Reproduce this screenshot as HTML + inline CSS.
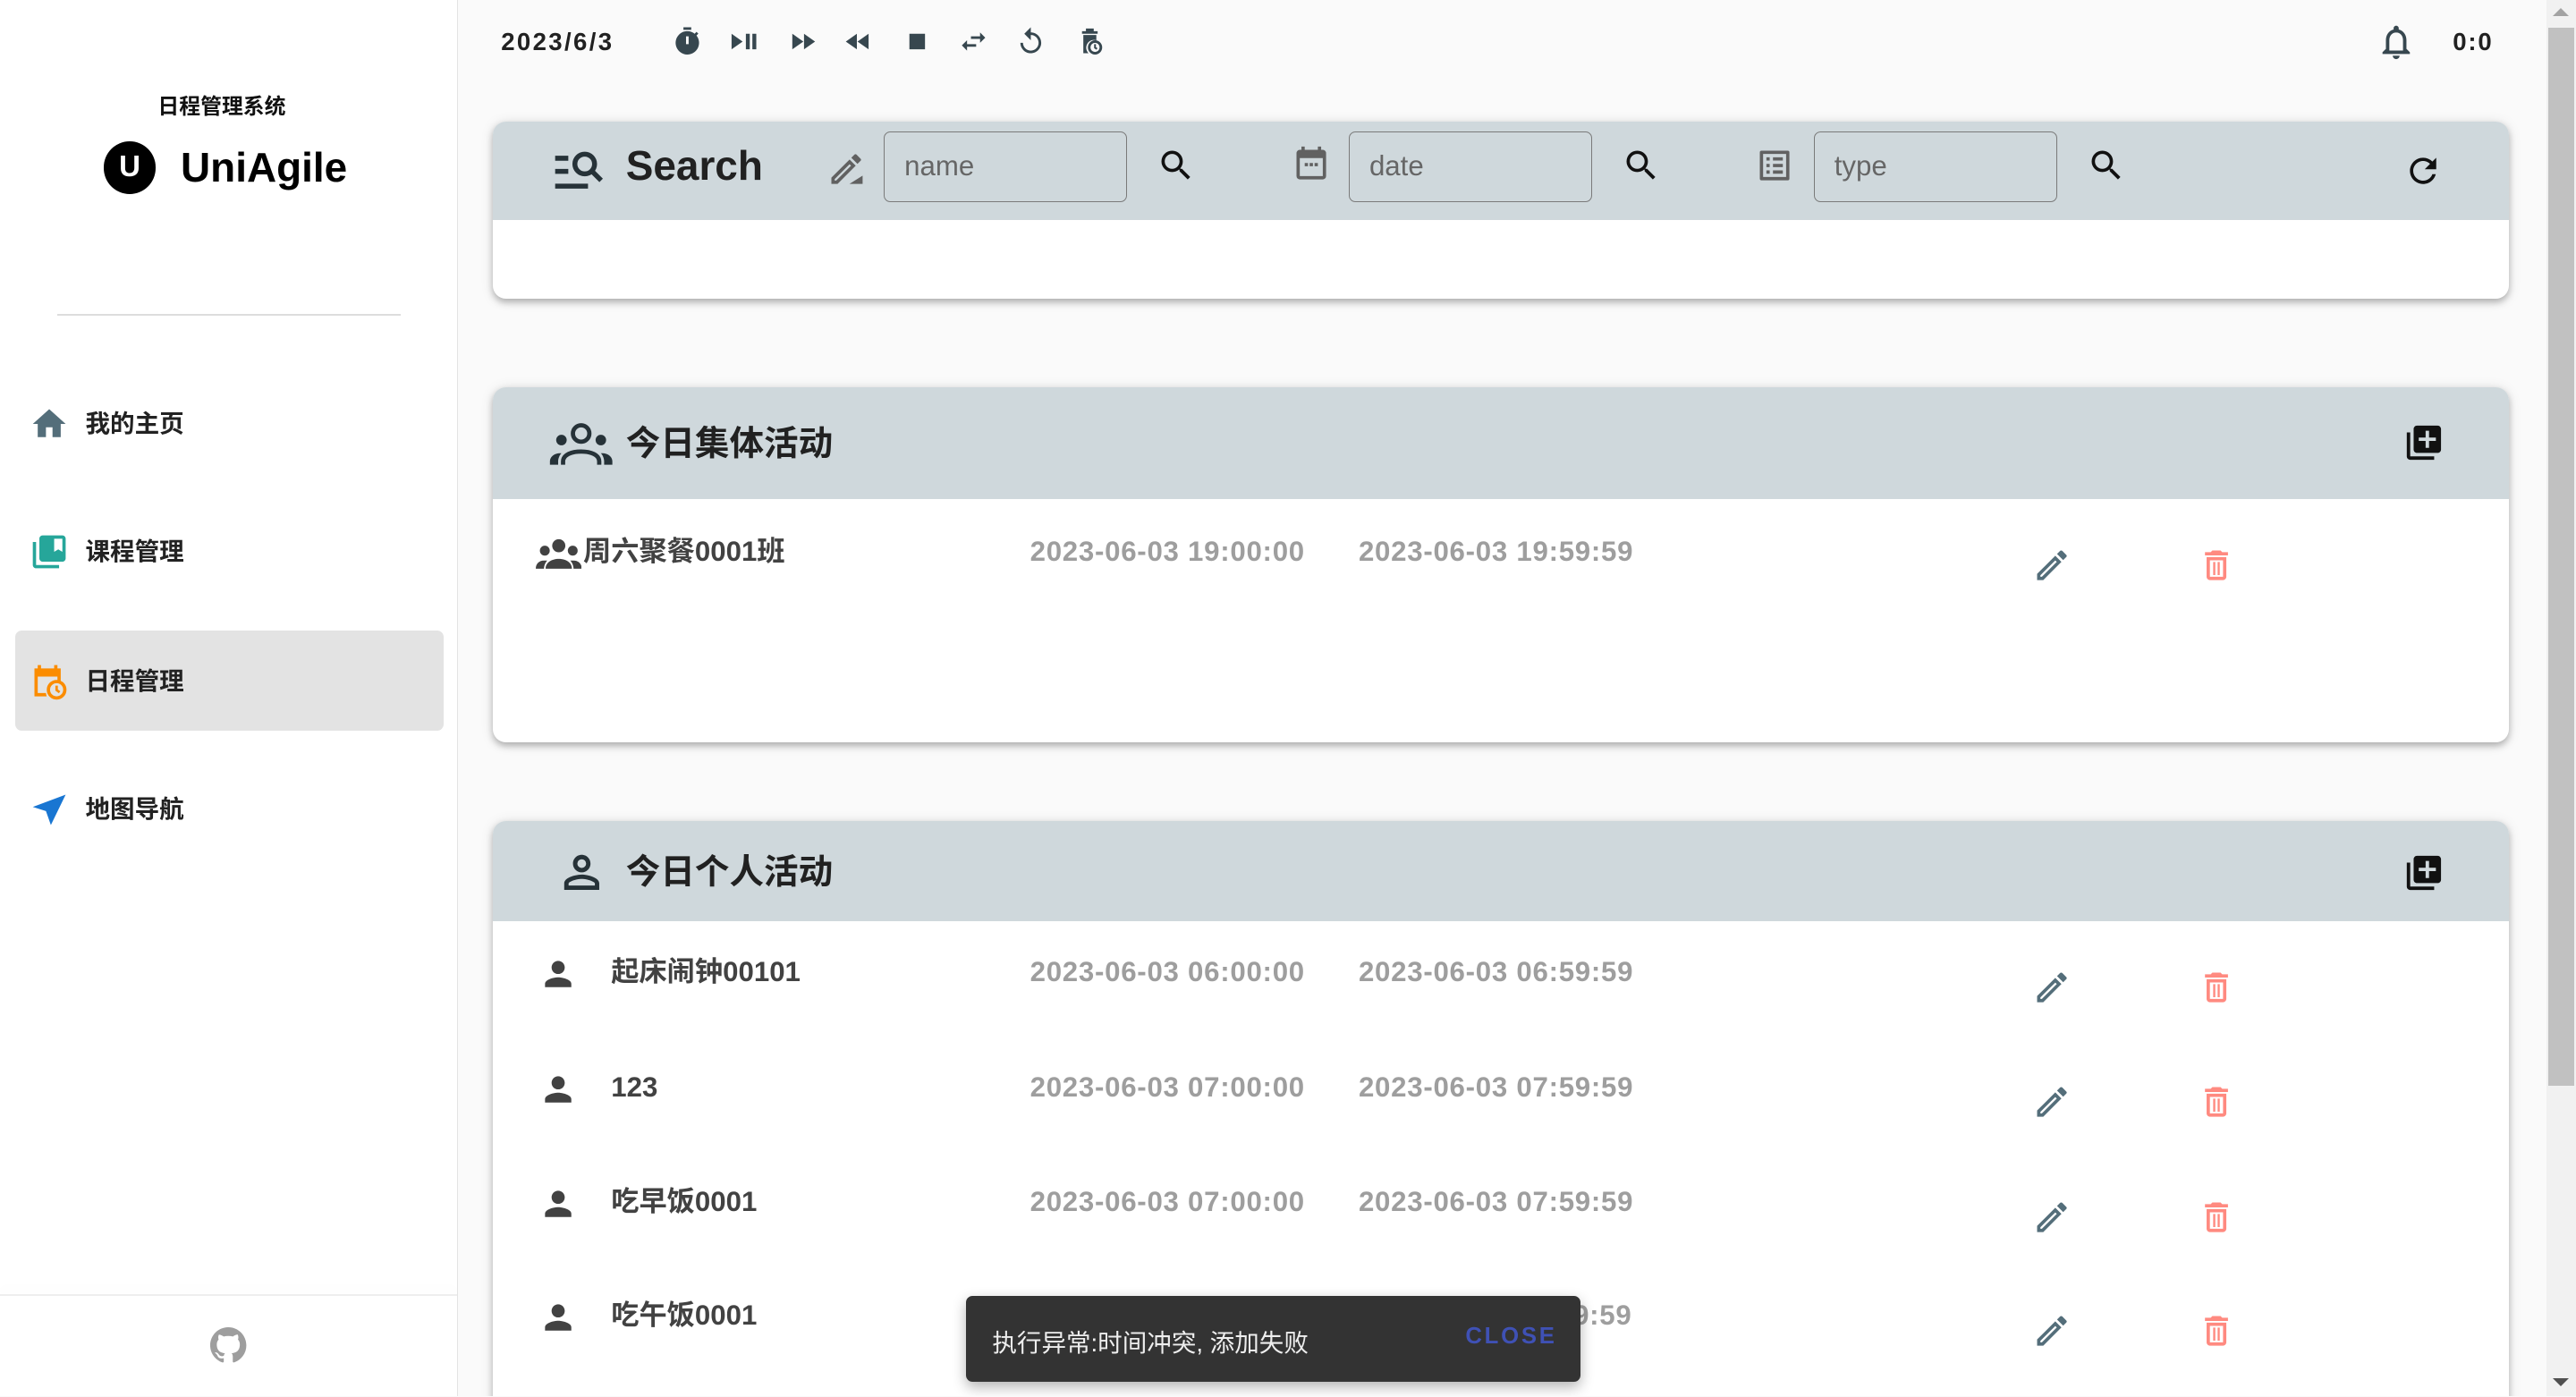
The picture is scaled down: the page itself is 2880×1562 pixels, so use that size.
<!DOCTYPE html>
<html><head><meta charset="utf-8"><style>
html,body{margin:0;padding:0;width:2880px;height:1562px;overflow:hidden;background:#fafafa;}
#w{zoom:1.8367;width:1568px;height:850px;position:relative;overflow:hidden;font-family:"Liberation Sans","Noto Sans CJK SC",sans-serif;}
.a{position:absolute;}
svg{position:absolute;display:block;}
.sb{left:0;top:0;width:278px;height:850px;background:#fff;border-right:1px solid #e3e3e3;}
.nav{left:52px;font-size:15px;font-weight:bold;color:#222;line-height:20px;}
.card{background:#fff;border-radius:8px;box-shadow:0 2px 4px rgba(0,0,0,.25),0 1px 8px rgba(0,0,0,.1);overflow:hidden;}
.hd{background:#cfd8dc;position:absolute;left:0;top:0;right:0;}
.inp{position:absolute;top:6px;width:148px;height:43px;border:1px solid #7a7a7a;border-radius:4px;font-size:17px;color:#666;line-height:41px;padding-left:12px;box-sizing:border-box;}
.ttl{font-size:21px;font-weight:bold;color:#212121;}
.nm{font-size:17px;font-weight:bold;color:#424242;line-height:20px;}
.dt{font-size:17px;font-weight:bold;color:#9e9e9e;line-height:20px;letter-spacing:0.4px;}
</style></head><body><div id="w">
<div class="a sb"></div>
<div class="a" style="left:0;width:270px;top:54px;text-align:center;font-size:13px;font-weight:bold;color:#111">日程管理系统</div>
<div class="a" style="left:63px;top:86px;width:32px;height:32px;border-radius:50%;background:#000;color:#fff;font-size:18px;font-weight:bold;text-align:center;line-height:32px">U</div>
<div class="a" style="left:110px;top:87px;font-size:25px;font-weight:bold;color:#000">UniAgile</div>
<div class="a" style="left:35px;top:191px;width:209px;height:1px;background:#ddd"></div>
<div class="a" style="left:9px;top:384px;width:261px;height:61px;background:#e3e3e3;border-radius:4px"></div>
<svg style="left:18px;top:246px" width="24" height="24" viewBox="0 0 24 24"><path fill="#546e7a" d="M10 20v-6h4v6h5v-8h3L12 3 2 12h3v8z"/></svg>
<div class="a nav" style="top:248px">我的主页</div>
<svg style="left:18px;top:324px" width="24" height="24" viewBox="0 0 24 24"><path fill="#26a69a" d="M4 6H2v14c0 1.1.9 2 2 2h14v-2H4V6zm16-4H8c-1.1 0-2 .9-2 2v12c0 1.1.9 2 2 2h12c1.1 0 2-.9 2-2V4c0-1.1-.9-2-2-2zm0 10l-2.5-1.5L15 12V4h5v8z"/></svg>
<div class="a nav" style="top:326px">课程管理</div>
<svg style="left:18px;top:403px" width="24" height="24" viewBox="0 0 24 24"><path fill="#fb8c00" d="M3 4h2V2h2v2h8V2h2v2h2v8a6 6 0 0 0-2-.4V9H5v10h5a6 6 0 0 0 .5 2H3z"/><circle cx="16.5" cy="17" r="5" fill="none" stroke="#fb8c00" stroke-width="2"/><path d="M16.5 14.5v2.7l1.8 1.3" stroke="#fb8c00" stroke-width="1.5" fill="none"/></svg>
<div class="a nav" style="top:405px">日程管理</div>
<svg style="left:18px;top:481px" width="24" height="24" viewBox="0 0 24 24"><path fill="#1976d2" d="M22 3L2 10.5l8 2.5 3 8.5z"/></svg>
<div class="a nav" style="top:483px">地图导航</div>
<div class="a" style="left:0;top:788px;width:278px;height:1px;background:#eee;box-shadow:0 -3px 6px rgba(0,0,0,.05)"></div>
<svg style="left:128px;top:808px" width="22" height="22" viewBox="0 0 16 16"><path fill="#9e9e9e" d="M8 0C3.58 0 0 3.58 0 8c0 3.54 2.29 6.53 5.47 7.59.4.07.55-.17.55-.38 0-.19-.01-.82-.01-1.49-2.01.37-2.53-.49-2.69-.94-.09-.23-.48-.94-.82-1.13-.28-.15-.68-.52-.01-.53.63-.01 1.08.58 1.23.82.72 1.21 1.87.87 2.33.66.07-.52.28-.87.51-1.07-1.78-.2-3.64-.89-3.64-3.95 0-.87.31-1.59.82-2.15-.08-.2-.36-1.02.08-2.12 0 0 .67-.21 2.2.82.64-.18 1.32-.27 2-.27.68 0 1.36.09 2 .27 1.53-1.04 2.2-.82 2.2-.82.44 1.1.16 1.92.08 2.12.51.56.82 1.27.82 2.15 0 3.07-1.87 3.75-3.65 3.95.29.25.54.73.54 1.48 0 1.07-.01 1.93-.01 2.2 0 .21.15.46.55.38A8.013 8.013 0 0016 8c0-4.42-3.58-8-8-8z"/></svg>

<div class="a" style="left:305px;top:17px;font-size:15px;font-weight:bold;color:#212121;letter-spacing:1.3px">2023/6/3</div>
<svg style="left:409px;top:16px" width="19" height="19" viewBox="0 0 24 24"><path fill="#37474f" d="M15 1H9v2h6V1zm4.03 6.39l1.42-1.42-1.41-1.41-1.42 1.42A9 9 0 1 0 19.03 7.39zM13 14h-2V8h2v6z"/></svg>
<svg style="left:444px;top:16px" width="19" height="19" viewBox="0 0 24 24"><path fill="#37474f" d="M2 6v12l8.5-6zM13 6h3v12h-3zM18 6h3v12h-3z"/></svg>
<svg style="left:479px;top:16px" width="19" height="19" viewBox="0 0 24 24"><path fill="#37474f" d="M4 18l8.5-6L4 6v12zm9-12v12l8.5-6L13 6z"/></svg>
<svg style="left:513px;top:16px" width="19" height="19" viewBox="0 0 24 24"><path fill="#37474f" d="M11 18V6l-8.5 6 8.5 6zm.5-6l8.5 6V6l-8.5 6z"/></svg>
<svg style="left:549px;top:16px" width="19" height="19" viewBox="0 0 24 24"><path fill="#37474f" d="M6 6h12v12H6z"/></svg>
<svg style="left:583px;top:16px" width="19" height="19" viewBox="0 0 24 24"><path fill="#37474f" d="M6.99 11L3 15l3.99 4v-3H14v-2H6.99v-3zM21 9l-3.99-4v3H10v2h7.01v3L21 9z"/></svg>
<svg style="left:618px;top:16px" width="19" height="19" viewBox="0 0 24 24"><path fill="#37474f" d="M12 5V1L7 6l5 5V7c3.31 0 6 2.69 6 6s-2.69 6-6 6-6-2.69-6-6H4c0 4.42 3.58 8 8 8s8-3.58 8-8-3.58-8-8-8z"/></svg>
<svg style="left:654px;top:16px" width="19" height="19" viewBox="0 0 24 24"><path fill="#37474f" d="M6 4h12v2H6zM9 2h6v2H9zM7 7h10v4a6 6 0 0 0-6 10H7z"/><circle cx="16" cy="16.5" r="4.5" fill="none" stroke="#37474f" stroke-width="2"/><path d="M16 14v2.7l1.5 1" stroke="#37474f" stroke-width="1.4" fill="none"/></svg>
<svg style="left:1446px;top:13px" width="25" height="25" viewBox="0 0 24 24"><path fill="#37474f" d="M12 22c1.1 0 2-.9 2-2h-4c0 1.1.9 2 2 2zm6-6v-5c0-3.07-1.64-5.64-4.5-6.32V4c0-.83-.67-1.5-1.5-1.5s-1.5.67-1.5 1.5v.68C7.63 5.36 6 7.92 6 11v5l-2 2v1h16v-1l-2-2zm-2 1H8v-6c0-2.48 1.51-4.5 4-4.5s4 2.02 4 4.5v6z"/></svg>
<div class="a" style="left:1493px;top:17px;font-size:15px;font-weight:bold;color:#212121;letter-spacing:1px">0:0</div>

<div class="a card" style="left:300px;top:74px;width:1227px;height:108px">
 <div class="hd" style="height:60px">
  <svg style="left:36px;top:16px" width="34" height="28" viewBox="0 0 34 28"><path fill="#263238" d="M2 5h8v3H2zM2 13h8v3H2zM2 22h20v3H2z"/><circle cx="20" cy="10" r="6" fill="none" stroke="#263238" stroke-width="3"/><path d="M24 14l6 6" stroke="#263238" stroke-width="3"/></svg>
  <div class="a" style="left:81px;top:12px;font-size:25px;font-weight:bold;color:#212121">Search</div>
  <svg style="left:203px;top:17px" width="24" height="24" viewBox="0 0 24 24"><path fill="#616161" d="M3 17.25V21h3.75L17.81 9.94l-3.75-3.75L3 17.25zM5.92 19H5v-.92l9.06-9.06.92.92L5.92 19zM20.71 5.63l-2.34-2.34a1 1 0 0 0-1.41 0l-1.83 1.83 3.75 3.75 1.83-1.83a1 1 0 0 0 0-1.41zM14 21h8v-5z"/></svg>
  <div class="inp" style="left:238px">name</div>
  <svg style="left:404px;top:15px" width="24" height="24" viewBox="0 0 24 24"><path fill="#111" d="M15.5 14h-.79l-.28-.27A6.471 6.471 0 0016 9.5 6.5 6.5 0 109.5 16c1.61 0 3.09-.59 4.23-1.57l.27.28v.79l5 4.99L20.49 19l-4.99-5zm-6 0C7.01 14 5 11.99 5 9.5S7.01 5 9.5 5 14 7.01 14 9.5 11.99 14 9.5 14z"/></svg>
  <svg style="left:486px;top:14px" width="24" height="24" viewBox="0 0 24 24"><path fill="#616161" d="M19 3h-1V1h-2v2H8V1H6v2H5a2 2 0 0 0-2 2v14a2 2 0 0 0 2 2h14a2 2 0 0 0 2-2V5a2 2 0 0 0-2-2zm0 16H5V8h14v11zM8 11h2v2H8zM11 11h2v2h-2zM14 11h2v2h-2z"/></svg>
  <div class="inp" style="left:521px">date</div>
  <svg style="left:687px;top:15px" width="24" height="24" viewBox="0 0 24 24"><path fill="#111" d="M15.5 14h-.79l-.28-.27A6.471 6.471 0 0016 9.5 6.5 6.5 0 109.5 16c1.61 0 3.09-.59 4.23-1.57l.27.28v.79l5 4.99L20.49 19l-4.99-5zm-6 0C7.01 14 5 11.99 5 9.5S7.01 5 9.5 5 14 7.01 14 9.5 11.99 14 9.5 14z"/></svg>
  <svg style="left:768px;top:15px" width="24" height="24" viewBox="0 0 24 24"><path fill="#616161" d="M4 3h16a1 1 0 0 1 1 1v16a1 1 0 0 1-1 1H4a1 1 0 0 1-1-1V4a1 1 0 0 1 1-1zm1 2v14h14V5zM7 7h2v2H7zm4 0h6v2h-6zM7 11h2v2H7zm4 0h6v2h-6zM7 15h2v2H7zm4 0h6v2h-6z"/></svg>
  <div class="inp" style="left:804px">type</div>
  <svg style="left:970px;top:15px" width="24" height="24" viewBox="0 0 24 24"><path fill="#111" d="M15.5 14h-.79l-.28-.27A6.471 6.471 0 0016 9.5 6.5 6.5 0 109.5 16c1.61 0 3.09-.59 4.23-1.57l.27.28v.79l5 4.99L20.49 19l-4.99-5zm-6 0C7.01 14 5 11.99 5 9.5S7.01 5 9.5 5 14 7.01 14 9.5 11.99 14 9.5 14z"/></svg>
  <svg style="left:1163px;top:18px" width="24" height="24" viewBox="0 0 24 24"><path fill="#111" d="M17.65 6.35A7.958 7.958 0 0012 4c-4.42 0-7.99 3.58-7.99 8s3.57 8 7.99 8c3.73 0 6.84-2.55 7.73-6h-2.08A5.99 5.99 0 0112 18c-3.31 0-6-2.69-6-6s2.69-6 6-6c1.66 0 3.14.69 4.22 1.78L13 11h7V4l-2.35 2.35z"/></svg>
 </div>
</div>

<div class="a card" style="left:300px;top:236px;width:1227px;height:216px">
 <div class="hd" style="height:68px">
  <svg style="left:34px;top:20px" width="40" height="28" viewBox="0 0 40 28"><circle cx="20" cy="8" r="5" fill="none" stroke="#263238" stroke-width="2.6"/><path d="M9 27v-2c0-4 5-6 11-6s11 2 11 6v2" fill="none" stroke="#263238" stroke-width="2.6"/><circle cx="8" cy="12" r="3.2" fill="#263238"/><circle cx="32" cy="12" r="3.2" fill="#263238"/><path d="M1 27v-2c0-3 3-5 6-5h1c-1 1-2 3-2 5v2zM39 27v-2c0-3-3-5-6-5h-1c1 1 2 3 2 5v2z" fill="#263238"/></svg>
  <div class="a ttl" style="left:81px;top:17px">今日集体活动</div>
  <svg style="left:1163px;top:21px" width="25" height="25" viewBox="0 0 24 24"><path fill="#111" d="M4 6H2v14c0 1.1.9 2 2 2h14v-2H4V6zm16-4H8c-1.1 0-2 .9-2 2v12c0 1.1.9 2 2 2h12c1.1 0 2-.9 2-2V4c0-1.1-.9-2-2-2zm-1 9h-4v4h-2v-4H9V9h4V5h2v4h4v2z"/></svg>
 </div>
 <svg style="left:26px;top:91px" width="28" height="20" viewBox="0 0 28 20"><circle cx="14" cy="5" r="4" fill="#424242"/><circle cx="5.5" cy="8" r="3" fill="#424242"/><circle cx="22.5" cy="8" r="3" fill="#424242"/><path d="M6 19c0-4 4-6 8-6s8 2 8 6zM0 19c0-3 2-5 5-5h2c-1 1-2 3-2 5zM28 19c0-3-2-5-5-5h-2c1 1 2 3 2 5z" fill="#424242"/></svg>
 <div class="a nm" style="left:55px;top:90px">周六聚餐0001班</div>
 <div class="a dt" style="left:327px;top:90px">2023-06-03 19:00:00</div>
 <div class="a dt" style="left:527px;top:90px">2023-06-03 19:59:59</div>
 <svg style="left:937px;top:96px" width="24" height="24" viewBox="0 0 24 24"><path fill="#546e7a" d="M3 17.25V21h3.75L17.81 9.94l-3.75-3.75L3 17.25zM5.92 19H5v-.92l9.06-9.06.92.92L5.92 19zM20.71 5.63l-2.34-2.34c-.2-.2-.45-.29-.71-.29s-.51.1-.7.29l-1.83 1.83 3.75 3.75 1.83-1.83a.996.996 0 000-1.41z"/></svg>
 <svg style="left:1037px;top:96px" width="24" height="24" viewBox="0 0 24 24"><path fill="#ff8a80" d="M16 9v10H8V9h8m-1.5-6h-5l-1 1H5v2h14V4h-3.5l-1-1zM18 7H6v12c0 1.1.9 2 2 2h8c1.1 0 2-.9 2-2V7zM10 10h1.3v8H10zM12.7 10H14v8h-1.3z"/></svg>
</div>

<div class="a card" style="left:300px;top:500px;width:1227px;height:380px">
 <div class="hd" style="height:61px">
  <svg style="left:38px;top:15px" width="32" height="32" viewBox="0 0 24 24"><path fill="#263238" d="M12 6a2 2 0 1 1 0 4 2 2 0 0 1 0-4m0 9c2.7 0 5.8 1.29 6 2v1H6v-.99c.2-.72 3.3-2.01 6-2.01m0-11C9.79 4 8 5.79 8 8s1.79 4 4 4 4-1.79 4-4-1.79-4-4-4zm0 9c-2.67 0-8 1.34-8 4v3h16v-3c0-2.66-5.330-4-8-4z"/></svg>
  <div class="a ttl" style="left:81px;top:14px">今日个人活动</div>
  <svg style="left:1163px;top:19px" width="25" height="25" viewBox="0 0 24 24"><path fill="#111" d="M4 6H2v14c0 1.1.9 2 2 2h14v-2H4V6zm16-4H8c-1.1 0-2 .9-2 2v12c0 1.1.9 2 2 2h12c1.1 0 2-.9 2-2V4c0-1.1-.9-2-2-2zm-1 9h-4v4h-2v-4H9V9h4V5h2v4h4v2z"/></svg>
 </div>
</div>
<div class="a" style="left:300px;top:500px;width:1227px;height:350px">
 <svg style="left:28px;top:81px" width="24" height="24" viewBox="0 0 24 24"><path fill="#424242" d="M12 12c2.21 0 4-1.79 4-4s-1.79-4-4-4-4 1.79-4 4 1.79 4 4 4zm0 2c-2.67 0-8 1.34-8 4v2h16v-2c0-2.66-5.33-4-8-4z"/></svg>
 <div class="a nm" style="left:72px;top:82px">起床闹钟00101</div>
 <div class="a dt" style="left:327px;top:82px">2023-06-03 06:00:00</div>
 <div class="a dt" style="left:527px;top:82px">2023-06-03 06:59:59</div>
 <svg style="left:937px;top:89px" width="24" height="24" viewBox="0 0 24 24"><path fill="#546e7a" d="M3 17.25V21h3.75L17.81 9.94l-3.75-3.75L3 17.25zM5.92 19H5v-.92l9.06-9.06.92.92L5.92 19zM20.71 5.63l-2.34-2.34c-.2-.2-.45-.29-.71-.29s-.51.1-.7.29l-1.83 1.83 3.75 3.75 1.83-1.83a.996.996 0 000-1.41z"/></svg>
 <svg style="left:1037px;top:89px" width="24" height="24" viewBox="0 0 24 24"><path fill="#ff8a80" d="M16 9v10H8V9h8m-1.5-6h-5l-1 1H5v2h14V4h-3.5l-1-1zM18 7H6v12c0 1.1.9 2 2 2h8c1.1 0 2-.9 2-2V7zM10 10h1.3v8H10zM12.7 10H14v8h-1.3z"/></svg>

 <svg style="left:28px;top:151px" width="24" height="24" viewBox="0 0 24 24"><path fill="#424242" d="M12 12c2.21 0 4-1.79 4-4s-1.79-4-4-4-4 1.79-4 4 1.79 4 4 4zm0 2c-2.67 0-8 1.34-8 4v2h16v-2c0-2.66-5.33-4-8-4z"/></svg>
 <div class="a nm" style="left:72px;top:152px">123</div>
 <div class="a dt" style="left:327px;top:152px">2023-06-03 07:00:00</div>
 <div class="a dt" style="left:527px;top:152px">2023-06-03 07:59:59</div>
 <svg style="left:937px;top:159px" width="24" height="24" viewBox="0 0 24 24"><path fill="#546e7a" d="M3 17.25V21h3.75L17.81 9.94l-3.75-3.75L3 17.25zM5.92 19H5v-.92l9.06-9.06.92.92L5.92 19zM20.71 5.63l-2.34-2.34c-.2-.2-.45-.29-.71-.29s-.51.1-.7.29l-1.83 1.83 3.75 3.75 1.83-1.83a.996.996 0 000-1.41z"/></svg>
 <svg style="left:1037px;top:159px" width="24" height="24" viewBox="0 0 24 24"><path fill="#ff8a80" d="M16 9v10H8V9h8m-1.5-6h-5l-1 1H5v2h14V4h-3.5l-1-1zM18 7H6v12c0 1.1.9 2 2 2h8c1.1 0 2-.9 2-2V7zM10 10h1.3v8H10zM12.7 10H14v8h-1.3z"/></svg>

 <svg style="left:28px;top:221px" width="24" height="24" viewBox="0 0 24 24"><path fill="#424242" d="M12 12c2.21 0 4-1.79 4-4s-1.79-4-4-4-4 1.79-4 4 1.79 4 4 4zm0 2c-2.67 0-8 1.34-8 4v2h16v-2c0-2.66-5.33-4-8-4z"/></svg>
 <div class="a nm" style="left:72px;top:222px">吃早饭0001</div>
 <div class="a dt" style="left:327px;top:222px">2023-06-03 07:00:00</div>
 <div class="a dt" style="left:527px;top:222px">2023-06-03 07:59:59</div>
 <svg style="left:937px;top:229px" width="24" height="24" viewBox="0 0 24 24"><path fill="#546e7a" d="M3 17.25V21h3.75L17.81 9.94l-3.75-3.75L3 17.25zM5.92 19H5v-.92l9.06-9.06.92.92L5.92 19zM20.71 5.63l-2.34-2.34c-.2-.2-.45-.29-.71-.29s-.51.1-.7.29l-1.83 1.83 3.75 3.75 1.83-1.83a.996.996 0 000-1.41z"/></svg>
 <svg style="left:1037px;top:229px" width="24" height="24" viewBox="0 0 24 24"><path fill="#ff8a80" d="M16 9v10H8V9h8m-1.5-6h-5l-1 1H5v2h14V4h-3.5l-1-1zM18 7H6v12c0 1.1.9 2 2 2h8c1.1 0 2-.9 2-2V7zM10 10h1.3v8H10zM12.7 10H14v8h-1.3z"/></svg>

 <svg style="left:28px;top:290px" width="24" height="24" viewBox="0 0 24 24"><path fill="#424242" d="M12 12c2.21 0 4-1.79 4-4s-1.79-4-4-4-4 1.79-4 4 1.79 4 4 4zm0 2c-2.67 0-8 1.34-8 4v2h16v-2c0-2.66-5.33-4-8-4z"/></svg>
 <div class="a nm" style="left:72px;top:291px">吃午饭0001</div>
 <div class="a dt" style="left:327px;top:291px">2023-06-03 11:00:00</div>
 <div class="a dt" style="left:527px;top:291px">2023-06-03 11:59:59</div>
 <svg style="left:937px;top:298px" width="24" height="24" viewBox="0 0 24 24"><path fill="#546e7a" d="M3 17.25V21h3.75L17.81 9.94l-3.75-3.75L3 17.25zM5.92 19H5v-.92l9.06-9.06.92.92L5.92 19zM20.71 5.63l-2.34-2.34c-.2-.2-.45-.29-.71-.29s-.51.1-.7.29l-1.83 1.83 3.75 3.75 1.83-1.83a.996.996 0 000-1.41z"/></svg>
 <svg style="left:1037px;top:298px" width="24" height="24" viewBox="0 0 24 24"><path fill="#ff8a80" d="M16 9v10H8V9h8m-1.5-6h-5l-1 1H5v2h14V4h-3.5l-1-1zM18 7H6v12c0 1.1.9 2 2 2h8c1.1 0 2-.9 2-2V7zM10 10h1.3v8H10zM12.7 10H14v8h-1.3z"/></svg>
</div>

<div class="a" style="left:588px;top:789px;width:374px;height:52px;background:#333;border-radius:4px;box-shadow:0 3px 8px rgba(0,0,0,.3)">
 <div class="a" style="left:16px;top:16px;font-size:15px;color:#eee">执行异常:时间冲突, 添加失败</div>
 <div class="a" style="left:304px;top:17px;font-size:14px;color:#3f51b5;letter-spacing:1.5px;font-weight:bold">CLOSE</div>
</div>

<div class="a" style="left:1550px;top:0;width:18px;height:850px;background:#f1f1f1"></div>
<div class="a" style="left:1551px;top:17px;width:16px;height:644px;background:#c1c1c1"></div>
<div class="a" style="left:1554px;top:5px;width:0;height:0;border-left:5px solid transparent;border-right:5px solid transparent;border-bottom:5px solid #a3a3a3"></div>
<div class="a" style="left:1554px;top:839px;width:0;height:0;border-left:5px solid transparent;border-right:5px solid transparent;border-top:5px solid #505050"></div>
</div></body></html>
